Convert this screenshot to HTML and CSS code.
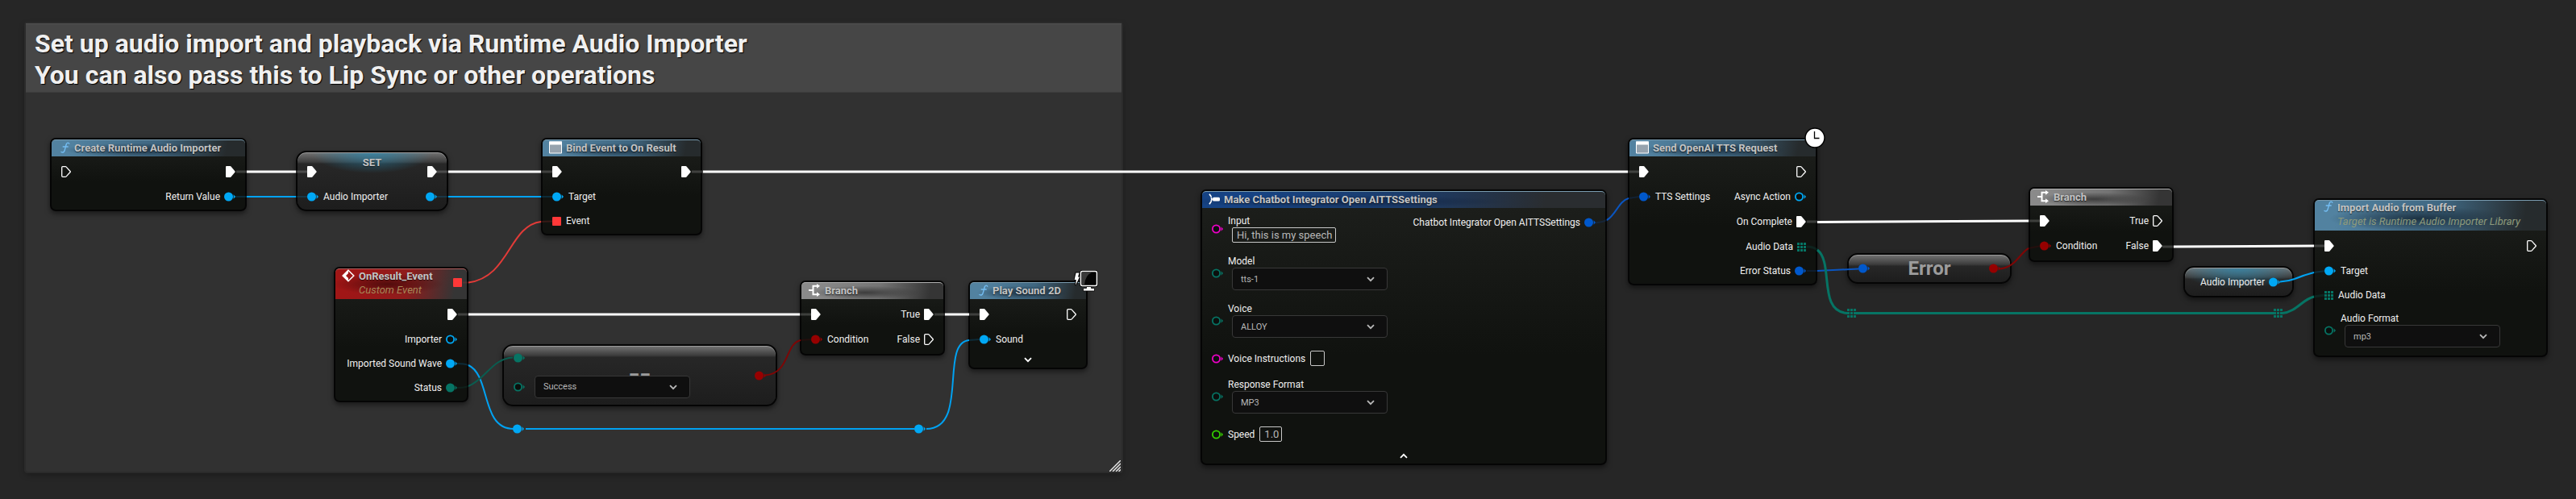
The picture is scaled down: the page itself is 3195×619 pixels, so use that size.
FILE: index.html
```html
<!DOCTYPE html>
<html lang="en">
<head>
  <meta charset="UTF-8" />
  <meta name="viewport" content="width=device-width, initial-scale=1.0"/>
  <title>Event Graph</title>
  <link rel="stylesheet" href="styles.css">
</head>
<body>
  <!-- Shared icons and pins -->
  <svg class="defs" width="0" height="0" aria-hidden="true">
    <symbol id="exec" viewBox="0 0 12 14"><path d="M0 1q0-1 1-1h4.500q.6 0 1 .4l5 6q.4.600 0 1.200l-5 6q-.4.400-1 .4H1q-1 0-1-1z" fill="#fff"/></symbol>
    <symbol id="exec-open" viewBox="0 0 12 14"><path d="M.7 1.700q0-1 1-1h3.500q.6 0 1 .4l4.900 5.400q.4.500 0 1l-4.900 5.400q-.4.400-1 .4H1.700q-1 0-1-1z" fill="none" stroke="#fff" stroke-width="1.300"/></symbol>
    <symbol id="pin" viewBox="0 0 14 12"><circle cx="5.500" cy="6" r="5.500" fill="currentColor"/><path d="M11.600 3.200L14 6l-2.400 2.800z" fill="currentColor"/></symbol>
    <symbol id="pin-open" viewBox="0 0 14 12"><circle cx="5.500" cy="6" r="4.600" fill="#0b0f0d" stroke="currentColor" stroke-width="1.800"/><path d="M11.600 3.200L14 6l-2.400 2.800z" fill="currentColor"/></symbol>
    <symbol id="pin-array" viewBox="0 0 11 11"><path d="M0 0h3v3H0zM4 0h3v3H4zM8 0h3v3H8zM0 4h3v3H0zM4 4h3v3H4zM8 4h3v3H8zM0 8h3v3H0zM4 8h3v3H4zM8 8h3v3H8z" fill="currentColor"/></symbol>
    <symbol id="chevron" viewBox="0 0 10 7"><path d="M1 1.200l4 4 4-4" fill="none" stroke="currentColor" stroke-width="1.800"/></symbol>
    <symbol id="func" viewBox="0 0 12 14"><path d="M10.800 2.200C10.200.8 8.400.6 7.400 2.600 6.600 4.400 5.800 9 4.900 11.300 4.200 13.200 2.300 13.500 1 12.500M3.200 6h6" fill="none" stroke="#74bdf2" stroke-width="1.400" stroke-linecap="round"/></symbol>
    <symbol id="window" viewBox="0 0 16 16"><path d="M.5 1h15v14H.5z" fill="#96a3ae" stroke="#fff"/><path d="M0 .5h16v4H0z" fill="#fff"/></symbol>
    <symbol id="branch" viewBox="0 0 16 16"><path d="M1 8h5M12 2.800H6.500v10.400H12" fill="none" stroke="#fff" stroke-width="2"/><path d="M11 0l4 2.800-4 3zM11 10.200l4 3-4 2.800z" fill="#fff"/></symbol>
    <symbol id="event" viewBox="0 0 16 16"><path d="M8 1.200L14.800 8 8 14.800 1.200 8z" fill="none" stroke="#fff" stroke-width="1.500"/><path d="M8 .5L.5 8 8 15.500V11L5 8l3-3z" fill="#fff"/></symbol>
    <symbol id="make" viewBox="0 0 14 14"><path d="M1 .8l2.500 3.400M3 5q2 2 0 4.200M3.500 9.600L1 13.200" fill="none" stroke="#fff" stroke-width="1.700"/><rect x="5" y="4.800" width="9" height="4.800" rx="1.500" fill="#fff"/></symbol>
  </svg>

  <main class="graph">
    <section class="comment">
      <h1>Set up audio import and playback via Runtime Audio Importer<br>You can also pass this to Lip Sync or other operations</h1>
      <svg class="grip" width="14" height="14" viewBox="0 0 14 14"><path d="M0 14L14 0M4 14L14 4M8 14l6-6M11.500 14l2.500-2.500" stroke="#e6e6e6" stroke-width="1.500"/></svg>
    </section>

    <!-- Node bodies -->
    <article class="node n-create">
      <header class="blue"><svg class="ico-f"><use href="#func"/></svg><h2>Create Runtime Audio Importer</h2></header>
      <div class="row flow"><svg class="exec"><use href="#exec-open"/></svg><span class="out"><svg class="exec"><use href="#exec"/></svg></span></div>
      <div class="row"><span class="out">Return Value<svg class="pin object"><use href="#pin"/></svg></span></div>
    </article>

    <article class="node glass tint n-set">
      <h2>SET</h2>
      <div class="row flow"><svg class="exec"><use href="#exec"/></svg><span class="out"><svg class="exec"><use href="#exec"/></svg></span></div>
      <div class="row"><svg class="pin object"><use href="#pin"/></svg>Audio Importer<span class="out"><svg class="pin object"><use href="#pin"/></svg></span></div>
    </article>

    <article class="node n-bind">
      <header class="blue"><svg class="ico"><use href="#window"/></svg><h2>Bind Event to On Result</h2></header>
      <div class="row flow"><svg class="exec"><use href="#exec"/></svg><span class="out"><svg class="exec"><use href="#exec"/></svg></span></div>
      <div class="row"><svg class="pin object"><use href="#pin"/></svg>Target</div>
      <div class="row"><i class="delegate"></i>Event</div>
    </article>

    <article class="node n-event">
      <header class="red tall"><svg class="ico"><use href="#event"/></svg><div><h2>OnResult_Event</h2><p>Custom Event</p></div><i class="delegate"></i></header>
      <div class="row flow"><span class="out"><svg class="exec"><use href="#exec"/></svg></span></div>
      <div class="row"><span class="out">Importer<svg class="pin object"><use href="#pin-open"/></svg></span></div>
      <div class="row"><span class="out">Imported Sound Wave<svg class="pin object"><use href="#pin"/></svg></span></div>
      <div class="row"><span class="out">Status<svg class="pin enum"><use href="#pin"/></svg></span></div>
    </article>

    <article class="node glass n-equal">
      <b class="big">==</b>
      <div class="inputs">
        <svg class="pin enum"><use href="#pin"/></svg>
        <div class="field"><svg class="pin enum"><use href="#pin-open"/></svg>
          <span class="select"><select aria-label="Compare with"><option>Success</option></select><svg class="chev"><use href="#chevron"/></svg></span>
        </div>
      </div>
      <svg class="pin bool"><use href="#pin"/></svg>
    </article>

    <article class="node n-branch1">
      <header class="gray"><svg class="ico"><use href="#branch"/></svg><h2>Branch</h2></header>
      <div class="row flow"><svg class="exec"><use href="#exec"/></svg><span class="out">True<svg class="exec"><use href="#exec"/></svg></span></div>
      <div class="row"><svg class="pin bool"><use href="#pin"/></svg>Condition<span class="out">False<svg class="exec"><use href="#exec-open"/></svg></span></div>
    </article>

    <article class="node n-play">
      <header class="blue"><svg class="ico-f"><use href="#func"/></svg><h2>Play Sound 2D</h2></header>
      <div class="row flow"><svg class="exec"><use href="#exec"/></svg><span class="out"><svg class="exec"><use href="#exec-open"/></svg></span></div>
      <div class="row"><svg class="pin object"><use href="#pin"/></svg>Sound</div>
      <button class="expand" aria-label="Show more pins"><svg class="chev"><use href="#chevron"/></svg></button>
      <svg class="badge client" width="30" height="28" viewBox="0 0 30 28">
        <path d="M2.500 3.500h4L5 8.500h2L2 19l.8-7H.6z" fill="#fff" stroke="#000" stroke-width="2" paint-order="stroke"/>
        <rect x="8.500" y="1.500" width="20" height="18" rx="2" fill="#050505" stroke="#000" stroke-width="3"/>
        <rect x="8.500" y="1.500" width="20" height="18" rx="2" fill="#050505" stroke="#fff" stroke-width="1.500"/>
        <path d="M10 18.500V3h12Q14 6 13 18.500z" fill="#3a3a3a"/>
        <path d="M15.500 20.500h6v2h4v3.500h-14v-3.500h4z" fill="#fff" stroke="#000" stroke-width=".8"/>
      </svg>
    </article>

    <article class="node n-make">
      <header class="navy"><svg class="ico-m"><use href="#make"/></svg><h2>Make Chatbot Integrator Open AITTSSettings</h2></header>
      <div class="columns">
        <div class="inputs">
          <div class="field"><svg class="pin string"><use href="#pin-open"/></svg><div class="stack"><label for="input">Input</label><input id="input" class="box wide" value="Hi, this is my speech"></div></div>
          <div class="field"><svg class="pin enum"><use href="#pin-open"/></svg><div class="stack"><label for="model">Model</label><span class="select"><select id="model"><option>tts-1</option></select><svg class="chev"><use href="#chevron"/></svg></span></div></div>
          <div class="field"><svg class="pin enum"><use href="#pin-open"/></svg><div class="stack"><label for="voice">Voice</label><span class="select"><select id="voice"><option>ALLOY</option></select><svg class="chev"><use href="#chevron"/></svg></span></div></div>
          <div class="field"><svg class="pin string"><use href="#pin-open"/></svg><label for="instructions">Voice Instructions</label><input id="instructions" class="box empty"></div>
          <div class="field"><svg class="pin enum"><use href="#pin-open"/></svg><div class="stack"><label for="format">Response Format</label><span class="select"><select id="format"><option>MP3</option></select><svg class="chev"><use href="#chevron"/></svg></span></div></div>
          <div class="field"><svg class="pin float"><use href="#pin-open"/></svg><label for="speed">Speed</label><input id="speed" class="box number" value="1.0"></div>
        </div>
        <div class="row"><span class="out">Chatbot Integrator Open AITTSSettings<svg class="pin struct"><use href="#pin"/></svg></span></div>
      </div>
      <button class="expand up" aria-label="Show fewer pins"><svg class="chev"><use href="#chevron"/></svg></button>
    </article>

    <article class="node n-send">
      <header class="blue"><svg class="ico"><use href="#window"/></svg><h2>Send OpenAI TTS Request</h2></header>
      <div class="row flow"><svg class="exec"><use href="#exec"/></svg><span class="out"><svg class="exec"><use href="#exec-open"/></svg></span></div>
      <div class="row"><svg class="pin struct"><use href="#pin"/></svg>TTS Settings<span class="out">Async Action<svg class="pin object"><use href="#pin-open"/></svg></span></div>
      <div class="row flow"><span class="out">On Complete<svg class="exec"><use href="#exec"/></svg></span></div>
      <div class="row"><span class="out">Audio Data<svg class="array enum"><use href="#pin-array"/></svg></span></div>
      <div class="row"><span class="out">Error Status<svg class="pin struct"><use href="#pin"/></svg></span></div>
      <svg class="badge clock" width="26" height="26" viewBox="0 0 26 26"><circle cx="13" cy="13" r="12" fill="#fff" stroke="#000" stroke-width="1.500"/><path d="M12.500 5v8.500h6" fill="none" stroke="#000" stroke-width="1.300"/></svg>
    </article>

    <article class="node glass n-error">
      <svg class="pin struct"><use href="#pin"/></svg><b class="big">Error</b><svg class="pin bool"><use href="#pin"/></svg>
    </article>

    <article class="node n-branch2">
      <header class="gray"><svg class="ico"><use href="#branch"/></svg><h2>Branch</h2></header>
      <div class="row flow"><svg class="exec"><use href="#exec"/></svg><span class="out">True<svg class="exec"><use href="#exec-open"/></svg></span></div>
      <div class="row"><svg class="pin bool"><use href="#pin"/></svg>Condition<span class="out">False<svg class="exec"><use href="#exec"/></svg></span></div>
    </article>

    <article class="node glass tint n-var">
      <span class="out">Audio Importer<svg class="pin object"><use href="#pin"/></svg></span>
    </article>

    <article class="node n-import">
      <header class="blue tall"><svg class="ico-f"><use href="#func"/></svg><div><h2>Import Audio from Buffer</h2><p>Target is Runtime Audio Importer Library</p></div></header>
      <div class="row flow"><svg class="exec"><use href="#exec"/></svg><span class="out"><svg class="exec"><use href="#exec-open"/></svg></span></div>
      <div class="row"><svg class="pin object"><use href="#pin"/></svg>Target</div>
      <div class="row"><svg class="array enum"><use href="#pin-array"/></svg>Audio Data</div>
      <div class="field"><svg class="pin enum"><use href="#pin-open"/></svg><div class="stack"><label for="audio-format">Audio Format</label><span class="select"><select id="audio-format"><option>mp3</option></select><svg class="chev"><use href="#chevron"/></svg></span></div></div>
    </article>

    <!-- Wires: bright outside the nodes, faint where they run over a node to its pin -->
    <svg class="wires">
      <g fill="none">
        <g stroke="#fff" stroke-width="3">
          <path d="M306 213h61M556 213h115M872 213h1147M581 390h411M1172 390h30M2254 275.500L2516 274M2696 306L2870 305"/>
          <path class="faint" d="M293 213h13M367 213h16M541 213h15M671 213h14M858 213h14M2019 213h14M568 390h13M992 390h14M1159 390h13M1202 390h13M2241 275h13M2516 274h14M2682 306h14M2870 305h13"/>
        </g>
        <g stroke="#00a2f2" stroke-width="2">
          <path d="M306 244h61M556 244h115"/>
          <path class="faint" d="M291 244h15M367 244h15M541 244h15M671 244h14"/>
          <path d="M581 453C609 466 596 532 637 532M652 532h482M1149 532C1202 532 1165 425 1202 422M2846 346Q2858 341 2870 338"/>
          <path class="faint" d="M567 451Q576 451 581 453M1202 422L1215 421M2870 338L2884 336"/>
          <path d="M2828 349.500Q2838 349 2846 346"/>
        </g>
        <g stroke="#e23b38" stroke-width="2">
          <path d="M581 350.500C632 344 631 280 671 275"/>
          <path class="faint" d="M574 350.500h7M671 275l14-.5"/>
        </g>
        <path d="M581 479C603 470 610 445 636 443.500" stroke="#0a5d50" stroke-width="2"/>
        <path d="M567 481Q576 481 581 479" class="faint" stroke="#0a5d50" stroke-width="2"/>
        <g stroke="#7d0606" stroke-width="2">
          <path d="M949 465.500C980 463 973 427 993 422M2480 333.500C2500 332 2505 314 2516 308"/>
          <path class="faint" d="M993 422l14-1M2516 308l15-3"/>
        </g>
        <g stroke="#0a55c0" stroke-width="2">
          <path d="M1993 273C2004 267 2008 249 2020 246M2254 336L2305 333.500"/>
          <path class="faint" d="M1979 276.500Q1987 276 1993 273M2020 246L2033 244M2241 336h13"/>
        </g>
        <g stroke="#067464" stroke-width="3">
          <path d="M2254 310C2275 326 2254 386 2291 388.500M2302 388.500H2820M2831 388.500C2848 387 2856 371 2870 368"/>
          <path class="faint" d="M2241 306Q2249 306 2254 310M2870 368L2883 366"/>
        </g>
      </g>
      <g class="object"><use href="#pin" x="636" y="526" width="14" height="12"/><use href="#pin" x="1134" y="526" width="14" height="12"/></g>
      <g class="enum"><use href="#pin-array" x="2291" y="383" width="11" height="11"/><use href="#pin-array" x="2820" y="383" width="11" height="11"/></g>
    </svg>
  </main>
</body>
</html>
```
FILE: styles.css
```css
body {
  margin: 0;
  background-color: #262626;
  color: #f0f0f0;
  font-family: Roboto, 'Liberation Sans', sans-serif;
  font-size: 12px;
}

h1, h2, p {
  margin: 0;
}

svg {
  display: block;
  flex: none;
}

.defs {
  position: absolute;
}

.graph {
  position: relative;
  min-height: 619px;
  overflow: hidden;
}

/* Comment box */
.comment {
  position: absolute;
  left: 32px;
  top: 29px;
  width: 1359px;
  height: 556px;
  background-color: #313131;
  border-radius: 2px;
  box-shadow: 0 0 0 2px #2b2b2b, 0 3px 8px rgba(0, 0, 0, 0.4);
}

.comment h1 {
  box-sizing: border-box;
  height: 86px;
  padding: 5px 11px;
  background-color: #464646;
  border-top: 1px solid #515151;
  border-bottom: 1px solid #3c3c3c;
  font-size: 32px;
  line-height: 39px;
  font-weight: 700;
  color: #f0f0f0;
  text-shadow: 1px 1px 1px #000;
  white-space: nowrap;
}

.grip {
  position: absolute;
  right: 1px;
  bottom: 0;
}

.wires {
  position: absolute;
  left: 0;
  top: 0;
  width: 100%;
  height: 100%;
  pointer-events: none;
}

.faint {
  opacity: 0.18;
}

/* Nodes */
.node {
  position: absolute;
  box-sizing: border-box;
  padding-bottom: 1px;
  border: 2px solid #050505;
  border-radius: 7px;
  background: linear-gradient(#1d1f1c, #10120f 60%);
  box-shadow: 0 3px 6px rgba(0, 0, 0, 0.5);
  white-space: nowrap;
}

.node header {
  display: flex;
  align-items: center;
  gap: 5px;
  box-sizing: border-box;
  height: 21px;
  margin-bottom: 3px;
  padding: 0 8px 2px;
  border-top: 1px solid #7a9cb0;
  border-radius: 5px 5px 0 0;
}

.node header.tall {
  height: 38px;
  align-items: flex-start;
}

.node h2 {
  font-size: 13px;
  line-height: 17px;
  font-weight: 700;
  color: #c4c4c4;
  text-shadow: 0 1px 1px rgba(0, 0, 0, 0.6);
}

.node header p {
  font-size: 13px;
  line-height: 17px;
  font-style: italic;
  color: #8e9b7c;
}

.node .blue {
  background: radial-gradient(ellipse at 45% 60%, rgba(20, 36, 50, 0.8), transparent 50%), linear-gradient(100deg, #5282a0 10%, #3f6680 55%, #262b2d 90%);
}

.node .navy {
  background: radial-gradient(ellipse at 35% 60%, rgba(12, 24, 50, 0.6), transparent 45%), linear-gradient(100deg, #164384 10%, #1b3c6b 50%, #2a2d30 85%);
}

.node .red {
  border-top-color: #b06060;
  background: radial-gradient(ellipse at 40% 50%, rgba(60, 8, 8, 0.75), transparent 50%), linear-gradient(100deg, #a01616 10%, #8e1c1c 55%, #353535 90%);
}

.node .red p {
  color: #a88758;
}

.node .gray {
  border-top-color: #b0b0b0;
  background: radial-gradient(ellipse at 45% 60%, rgba(50, 50, 50, 0.85), transparent 50%), linear-gradient(100deg, #8a8a8a 10%, #747474 55%, #353535 90%);
}

.ico {
  width: 16px;
  height: 16px;
}

.ico-f {
  width: 12px;
  height: 14px;
  margin-left: 3px;
}

.ico-m {
  width: 14px;
  height: 14px;
}

.row {
  display: flex;
  align-items: center;
  gap: 6px;
  height: 30px;
  padding: 0 12px;
}

.row.flow {
  height: 32px;
}

.out {
  display: flex;
  align-items: center;
  gap: 5px;
  margin-left: auto;
}

/* Pins */
.exec {
  width: 12px;
  height: 14px;
}

.pin {
  width: 14px;
  height: 12px;
}

.array {
  width: 11px;
  height: 11px;
}

.delegate {
  width: 11px;
  height: 11px;
  border-radius: 1px;
  background-color: #ff3838;
}

.red .delegate {
  margin: 11px -2px 0 auto;
}

.object {
  color: #00a8f5;
}

.enum {
  color: #067464;
}

.bool {
  color: #960000;
}

.struct {
  color: #0058cc;
}

.string {
  color: #f000c8;
}

.float {
  color: #35d000;
}

/* Controls */
.field {
  display: flex;
  align-items: center;
  gap: 6px;
  padding: 0 12px;
}

.stack {
  display: flex;
  flex-direction: column;
  align-items: flex-start;
}

.stack label {
  line-height: 15px;
}

.stack .select,
.stack .box {
  margin-left: 5px;
}

.select {
  position: relative;
  color: #b8b8b8;
}

.select select {
  display: block;
  appearance: none;
  box-sizing: border-box;
  width: 193px;
  height: 28px;
  padding: 0 10px;
  border: 1px solid #383838;
  border-radius: 4px;
  background-color: #0f0f0f;
  color: #b8b8b8;
  font: 11px Roboto, 'Liberation Sans', sans-serif;
}

.select .chev {
  position: absolute;
  right: 16px;
  top: 11px;
}

.chev {
  width: 10px;
  height: 7px;
}

.box {
  box-sizing: border-box;
  height: 19px;
  padding: 0 0 0 5px;
  border: 1px solid #c8c8c8;
  border-radius: 2px;
  background: transparent;
  color: #b8b8b8;
  font: 13px Roboto, 'Liberation Sans', sans-serif;
}

.wide {
  width: 129px;
}

.empty {
  width: 18px;
}

.number {
  width: 28px;
}

.expand {
  display: block;
  margin: 7px auto 5px;
  padding: 0;
  border: 0;
  background: none;
  color: #fff;
}

.expand.up {
  margin-top: 14px;
}

.expand.up svg {
  transform: scaleY(-1);
}

.badge {
  position: absolute;
}

.client {
  right: -15px;
  top: -15px;
}

.clock {
  right: -12px;
  top: -15px;
}

/* Compact nodes */
.node.glass {
  border-radius: 13px;
  background: linear-gradient(#747474, #3c3c3c 12px, #333 13px, #272727 14px, #1d1d1d);
  box-shadow: inset 0 1px 0 #999, 0 3px 6px rgba(0, 0, 0, 0.5);
}

.node.tint {
  background: radial-gradient(ellipse 75px 26px at 50% 0, rgba(40, 135, 175, 0.75), transparent), linear-gradient(#747474, #3c3c3c 12px, #333 13px, #272727 14px, #1d1d1d);
}

.big {
  font-size: 24px;
  line-height: 28px;
  color: #9c9c9c;
}

/* Node places on the canvas */
.n-create {
  left: 62px;
  top: 171px;
  width: 244px;
}

.n-set {
  left: 367px;
  top: 187px;
  width: 189px;
}

.n-set h2 {
  height: 8px;
  line-height: 26px;
  text-align: center;
}

.n-bind {
  left: 671px;
  top: 171px;
  width: 200px;
}

.n-event {
  left: 414px;
  top: 331px;
  width: 167px;
}

.n-equal {
  left: 623px;
  top: 427px;
  width: 341px;
  height: 77px;
  display: flex;
  align-items: center;
  justify-content: space-between;
  padding: 0 12px;
}

.n-equal .inputs {
  display: flex;
  flex-direction: column;
  gap: 16px;
}

.n-equal .field {
  gap: 12px;
  padding: 0;
}

.n-equal .big {
  position: absolute;
  left: 0;
  right: 0;
  top: 24px;
  text-align: center;
}

.n-branch1 {
  left: 992px;
  top: 348px;
  width: 180px;
}

.n-play {
  left: 1201px;
  top: 348px;
  width: 148px;
}

.n-make {
  left: 1489px;
  top: 235px;
  width: 504px;
}

.n-make .columns {
  display: flex;
  justify-content: space-between;
}

.n-make .inputs {
  display: grid;
  gap: 16px;
  padding-top: 6px;
}

.n-send {
  left: 2019px;
  top: 171px;
  width: 235px;
}

.n-error {
  left: 2291px;
  top: 314px;
  width: 204px;
  height: 38px;
  display: flex;
  align-items: center;
  justify-content: space-between;
  padding: 0 12px;
}

.n-branch2 {
  left: 2516px;
  top: 232px;
  width: 180px;
}

.n-branch1,
.n-branch2 {
  padding-bottom: 3px;
}

.n-var {
  left: 2708px;
  top: 330px;
  width: 137px;
  height: 39px;
  display: flex;
  align-items: center;
  padding: 0 15px;
}

.n-import {
  left: 2869px;
  top: 246px;
  width: 291px;
}

.n-import .field {
  padding-top: 7px;
  padding-bottom: 9px;
}
```
